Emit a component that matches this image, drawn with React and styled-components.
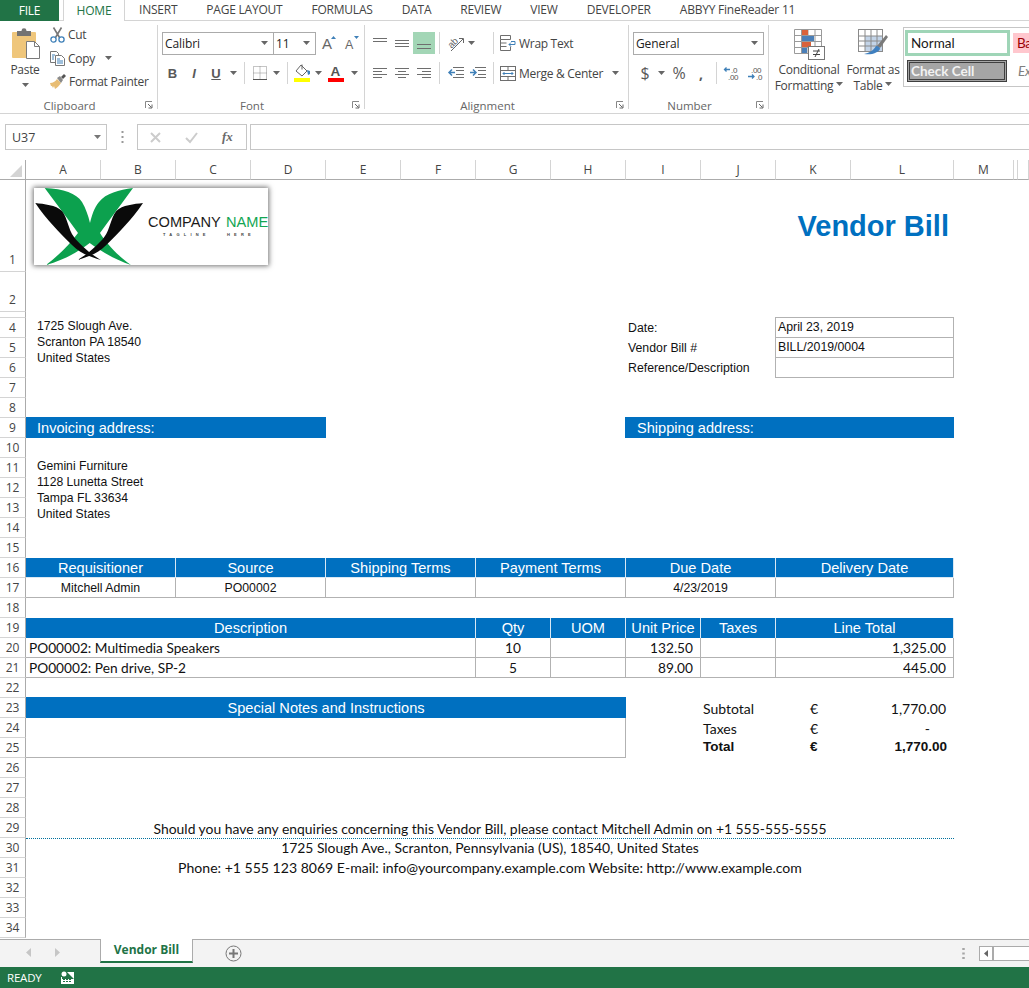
import React from "react";
import styled, { createGlobalStyle } from "styled-components";

const UI = `"Open Sans", "Noto Sans", sans-serif`;
const ARIAL = `"Liberation Sans", Arial, sans-serif`;
const CALIBRI = `Lato, "Open Sans", sans-serif`;
const GREEN = "#217346";
const BLUE = "#0070c0";
const LINE = "#b2b2b2";

const Global = createGlobalStyle`
  html, body { margin: 0; padding: 0; overflow: hidden; background: #fff; }
  * { box-sizing: border-box; }
  svg { overflow: visible; }
`;

const Page = styled.div`
  width: 1029px;
  height: 988px;
  display: flex;
  flex-direction: column;
  overflow: hidden;
  font-family: ${UI};
  color: #444;
`;

/* ---------- tabs ---------- */
const TabBar = styled.div`
  height: 21px;
  flex: none;
  display: flex;
  border-bottom: 1px solid #d4d4d4;
  font-size: 12px;
  letter-spacing: -0.22px;
`;
const FileTab = styled.div`
  width: 59px;
  height: 21px;
  background: ${GREEN};
  color: #fff;
  display: flex;
  align-items: center;
  justify-content: center;
`;
const HomeTab = styled.div`
  margin-left: 4px;
  width: 62px;
  height: 21px;
  background: #fff;
  color: ${GREEN};
  border: solid #d4d4d4;
  border-width: 0 1px;
  display: flex;
  align-items: center;
  justify-content: center;
`;
const Tab = styled.div`
  margin-left: ${(p) => p.$m}px;
  line-height: 20px;
  white-space: nowrap;
`;

/* ---------- ribbon ---------- */
const Ribbon = styled.div`
  height: 93px;
  flex: none;
  display: flex;
  padding-top: 4px;
  border-bottom: 1px solid #d4d4d4;
  font-size: 12px;
  letter-spacing: -0.3px;
`;
const Group = styled.section`
  width: ${(p) => p.$w}px;
  height: 84px;
  flex: none;
  display: flex;
  flex-direction: column;
  border-right: ${(p) => (p.$last ? "none" : "1px solid #d4d4d4")};
`;
const GroupBody = styled.div`
  flex: 1;
  display: flex;
  min-height: 0;
  padding-left: ${(p) => p.$pl || 0}px;
`;
const GroupFoot = styled.footer`
  height: 18px;
  margin-bottom: -5px;
  display: grid;
  grid-template-columns: 1fr auto 1fr;
  align-items: center;
  padding-right: 18px;
  color: #666;
  font-size: 11.5px;
  letter-spacing: 0;
  span { grid-column: 2; }
  svg { justify-self: end; margin-right: -14px; }
`;
const Launcher = () => (
  <svg width="8" height="8" viewBox="0 0 8 8">
    <path d="M0.5 7V0.5H7" fill="none" stroke="#888" />
    <path d="M3 3l3.5 3.5M7 3.5V7H3.5" fill="none" stroke="#666" />
  </svg>
);
const Stack = styled.div`
  display: flex;
  flex-direction: column;
  padding-top: 7px;
  gap: 8px;
`;
const Row = styled.div`
  display: flex;
  align-items: center;
  height: 22px;
`;
const Tool = styled.div`
  width: ${(p) => p.$w}px;
  height: 22px;
  flex: none;
  display: flex;
  align-items: center;
  justify-content: center;
  margin-left: ${(p) => p.$ml || 0}px;
  background: ${(p) => (p.$on ? "#a3d6b6" : "transparent")};
`;
const Sep = styled.i`
  width: 1px;
  height: 22px;
  flex: none;
  background: #d4d4d4;
  margin: 0 ${(p) => p.$r ?? 5}px 0 ${(p) => p.$l ?? 5}px;
`;
const Glyph = styled.span`
  font: ${(p) => (p.$i ? "italic " : "")}${(p) => p.$b || 700} ${(p) => p.$s || 13}px ${(p) => p.$f || ARIAL};
  color: #595959;
  text-decoration: ${(p) => (p.$u ? "underline" : "none")};
  letter-spacing: 0;
`;
const Caret = ({ c = "#666" }) => (
  <svg width="7" height="4" viewBox="0 0 7 4">
    <path d="M0 0h7L3.5 4z" fill={c} />
  </svg>
);
const Combo = styled.div`
  width: ${(p) => p.$w}px;
  height: 23px;
  flex: none;
  margin-left: ${(p) => p.$ml || 0}px;
  border: 1px solid #ababab;
  background: #fff;
  color: #222;
  display: flex;
  align-items: center;
  justify-content: space-between;
  padding: 0 5px 0 2px;
  letter-spacing: -0.1px;
`;

const PasteCol = styled.div`
  width: 50px;
  flex: none;
  display: flex;
  flex-direction: column;
  align-items: center;
  padding-top: 3px;
  gap: 3px;
  span { line-height: 16px; }
  svg:last-child { margin-top: 2px; }
`;
const ClipCol = styled.div`
  display: flex;
  flex-direction: column;
  margin-top: -2px;
`;
const ClipRow = styled.div`
  height: 23.5px;
  flex: none;
  display: flex;
  align-items: center;
  gap: 3px;
  white-space: nowrap;
  svg:first-child { flex: none; }
`;
const TextTool = styled.span`
  margin-left: ${(p) => p.$ml ?? 3}px;
  white-space: nowrap;
`;
const BigTool = styled.div`
  width: ${(p) => p.$w}px;
  flex: none;
  display: flex;
  flex-direction: column;
  align-items: center;
  padding-top: 4px;
  line-height: 16px;
  white-space: nowrap;
  svg:first-child { margin-bottom: 2px; }
  span svg { margin-left: 3px; vertical-align: 2px; }
`;
const Gallery = styled.div`
  margin-top: 2px;
  flex: 1;
  height: 60px;
  border: 1px solid #c6c6c6;
  border-right: none;
  display: grid;
  grid-template-columns: 105px 1fr;
  grid-template-rows: 26px 22px;
  column-gap: 3px;
  row-gap: 4px;
  padding: 2px 0 0 1px;
  overflow: hidden;
`;
const StyleNormal = styled.div`
  border: 3px solid #9fd5b7;
  background: #fff;
  color: #1a1a1a;
  font: 13.5px ${CALIBRI};
  letter-spacing: 0;
  display: flex;
  align-items: center;
  padding-left: 3px;
`;
const StyleBad = styled.div`
  align-self: center;
  height: 20px;
  background: #ffc7ce;
  color: #9c0006;
  font: 13.5px ${CALIBRI};
  padding-left: 4px;
  line-height: 20px;
`;
const StyleCheck = styled.div`
  margin-left: 2px;
  width: 100px;
  background: #a5a5a5;
  border: 3px double #3f3f3f;
  color: #f2f2f2;
  font: 700 13.5px ${CALIBRI};
  letter-spacing: 0;
  display: flex;
  align-items: center;
  padding-left: 1px;
  height: 22px;
`;
const StyleExp = styled.div`
  color: #7f7f7f;
  font: italic 13.5px ${CALIBRI};
  padding-left: 5px;
  line-height: 22px;
`;

/* ---------- ribbon icons ---------- */
const PasteIcon = () => (
  <svg width="29" height="31" viewBox="0 0 29 31" style={{ marginLeft: 2 }}>
    <rect x="0" y="4" width="24" height="26" rx="1" fill="#efc67b" />
    <rect x="5" y="3" width="14" height="5" fill="#737373" />
    <circle cx="12" cy="2.6" r="2.4" fill="#737373" />
    <path d="M14.5 13.5h8l5 5v12h-13z" fill="#fff" stroke="#7a7a7a" />
    <path d="M22.5 13.5v5h5" fill="none" stroke="#7a7a7a" />
  </svg>
);
const CutIcon = () => (
  <svg width="15" height="16" viewBox="0 0 15 16">
    <path d="M3.5 0.5l6 10M11.5 0.5l-6 10" stroke="#777" strokeWidth="1.6" fill="none" />
    <circle cx="3.5" cy="12.5" r="2.6" fill="none" stroke="#3f80b8" strokeWidth="1.3" />
    <circle cx="11.5" cy="12.5" r="2.6" fill="none" stroke="#3f80b8" strokeWidth="1.3" />
  </svg>
);
const CopyIcon = () => (
  <svg width="15" height="15" viewBox="0 0 15 15">
    <path d="M0.5 0.5h6l2 2v9h-8z" fill="#fff" stroke="#777" />
    <path d="M5.5 4.5h6l3 3v7h-9z" fill="#fff" stroke="#777" />
    <path d="M2 4h3M2 6h2M2 8h2M7 8h3M7 10h6M7 12h6" stroke="#3f80b8" />
  </svg>
);
const BrushIcon = () => (
  <svg width="16" height="15" viewBox="0 0 16 15">
    <path d="M0 9c3 0 6-2 7-4l4 4c-2 3-4 5-6 6L4 12l-1 2-1-2-1 0z" fill="#e8bd74" />
    <path d="M7 4l3-2 3 4-2 3z" fill="#8a8a8a" />
    <path d="M11 3l3-3 2 2-3 3z" fill="#555" />
  </svg>
);
const GrowIcon = ({ up }) => (
  <svg width="14" height="14" viewBox="0 0 14 14">
    <text x="0" y={13} fontFamily="Liberation Sans" fontSize={up ? 15 : 12.5} fill="#666">A</text>
    <path d={up ? "M9 3l2.5-3L14 3z" : "M9 0h5l-2.5 3z"} fill="#3f80b8" />
  </svg>
);
const BorderIcon = () => (
  <svg width="14" height="14" viewBox="0 0 14 14">
    <path d="M0.5 0.5h13v13h-13zM7 0.5v13M0.5 7h13" fill="none" stroke="#8a8a8a" strokeDasharray="1 1" />
    <path d="M0 13.5h14" stroke="#555" />
  </svg>
);
const FillIcon = () => (
  <svg width="17" height="19" viewBox="0 0 17 19">
    <path d="M7 1l6 6-5 5-6-5z" fill="#fff" stroke="#666" />
    <path d="M8 0.5v5" stroke="#666" />
    <path d="M13 6l3 1 0 3-2 1z" fill="#3f80b8" />
    <rect x="0" y="14" width="16" height="4" fill="#ffff00" />
  </svg>
);
const FontColorIcon = () => (
  <svg width="16" height="19" viewBox="0 0 16 19">
    <text x="2.5" y="12" fontFamily="Liberation Sans" fontWeight="700" fontSize="13.5" fill="#555">A</text>
    <rect x="0" y="14" width="16" height="4" fill="#ff0000" />
  </svg>
);
const Lines = ({ rows }) => (
  <svg width="14" height="14" viewBox="0 0 14 14">
    {rows.map(([a, b, y]) => (
      <path key={y} d={`M${a} ${y + 0.5}H${b}`} stroke="#6e6e6e" />
    ))}
  </svg>
);
const OrientIcon = () => (
  <svg width="18" height="18" viewBox="0 0 18 18">
    <text x="1" y="12" fontFamily="Liberation Sans" fontSize="9.5" fill="#666" transform="rotate(-45 6 9)">ab</text>
    <path d="M4 17L16 5M12 4.5h4.5V9" fill="none" stroke="#666" />
  </svg>
);
const IndentIcon = ({ rev }) => (
  <svg width="16" height="12" viewBox="0 0 16 12">
    <path d="M5 0.5h11M8 3.5h8M8 7.5h8M5 10.5h11" stroke="#6e6e6e" />
    <path d={rev ? "M7 5.5H1M4 2.5l-3 3 3 3" : "M0 5.5h6M3 2.5l3 3-3 3"} fill="none" stroke="#3f80b8" strokeWidth="1.5" />
  </svg>
);
const WrapIcon = () => (
  <svg width="16" height="16" viewBox="0 0 16 16">
    <path d="M0.5 0.5h10v4h-10zM0.5 4.5v11h10v-4M0.5 8h6M0.5 11.5h6" fill="none" stroke="#6e6e6e" />
    <path d="M11 6.5h4v3H9M11 7.5l-2 2 2 2" fill="none" stroke="#3f80b8" />
  </svg>
);
const MergeIcon = () => (
  <svg width="16" height="15" viewBox="0 0 16 15">
    <rect x="0.5" y="0.5" width="15" height="14" fill="none" stroke="#6e6e6e" />
    <path d="M0.5 4.5h15M0.5 10.5h15M8 0.5v4M8 10.5v4" stroke="#6e6e6e" />
    <path d="M3 7.5h10M4.5 6l-1.5 1.5 1.5 1.5M11.5 6l1.5 1.5-1.5 1.5" fill="none" stroke="#3f80b8" />
  </svg>
);
const DecIcon = ({ more }) => (
  <svg width="15" height="15" viewBox="0 0 15 15">
    {more ? (
      <>
        <text x="3" y="6.5" fontFamily="Liberation Sans" fontSize="8" fill="#555">.00</text>
        <text x="8" y="14" fontFamily="Liberation Sans" fontSize="8" fill="#555">.0</text>
        <path d="M0 10.5h6M4 8.5l2 2-2 2" fill="none" stroke="#3f80b8" strokeWidth="1.3" />
      </>
    ) : (
      <>
        <text x="7" y="6.5" fontFamily="Liberation Sans" fontSize="8" fill="#555">.0</text>
        <text x="4" y="14" fontFamily="Liberation Sans" fontSize="8" fill="#555">.00</text>
        <path d="M6 3.5H0.5M2.5 1.5l-2 2 2 2" fill="none" stroke="#3f80b8" strokeWidth="1.3" />
      </>
    )}
  </svg>
);
const CondIcon = () => (
  <svg width="31" height="31" viewBox="0 0 31 31">
    <path d="M0.5 0.5h27v24h-27zM7.5 0.5v24M14 0.5v24M21 0.5v24M0.5 6.5h27M0.5 12.5h27M0.5 18.5h27" fill="none" stroke="#9a9a9a" />
    <rect x="8" y="1" width="6" height="5" fill="#d9623a" />
    <rect x="8" y="7" width="12" height="5" fill="#4a7fb8" />
    <rect x="8" y="13" width="9" height="5" fill="#d9623a" />
    <rect x="8" y="19" width="5" height="5" fill="#4a7fb8" />
    <rect x="14.5" y="17.5" width="16" height="13" fill="#fff" stroke="#777" />
    <path d="M19 22h7M19 25.5h7M25 20l-4 8" fill="none" stroke="#444" />
  </svg>
);
const TableIcon = () => (
  <svg width="31" height="31" viewBox="0 0 31 31">
    <rect x="0.5" y="0.5" width="24" height="22" fill="#fff" stroke="#8a8a8a" />
    <rect x="7" y="7" width="17" height="15" fill="#c3d4e8" />
    <path d="M7 0.5v22M13 0.5v22M19 0.5v22M0.5 7h24M0.5 12h24M0.5 17h24" fill="none" stroke="#8a8a8a" />
    <path d="M19 17l9-11 2 2-8 11z" fill="#7a7a7a" />
    <path d="M18 17c3 0 4 2 4 3-2 4-8 6-16 5 5-1 9-3 12-8z" fill="#3f80c0" />
  </svg>
);

/* ---------- formula bar ---------- */
const FormulaBar = styled.div`
  height: 46px;
  flex: none;
  display: flex;
  align-items: flex-start;
  padding: 10px 0 0 5px;
`;
const NameBox = styled.div`
  width: 102px;
  height: 26px;
  border: 1px solid #c6c6c6;
  display: flex;
  align-items: center;
  justify-content: space-between;
  padding: 0 5px 0 6px;
  font-size: 12.5px;
`;
const Dots = styled.div`
  width: 30px;
  height: 26px;
  display: flex;
  align-items: center;
  justify-content: center;
`;
const FxBox = styled.div`
  width: 110px;
  height: 26px;
  border: 1px solid #c6c6c6;
  display: flex;
  align-items: center;
  padding-left: 12px;
  gap: 24px;
`;
const Fx = styled.span`
  font: italic 700 13px "Liberation Serif", serif;
  color: #6a6a6a;
`;
const FormulaInput = styled.div`
  flex: 1;
  height: 26px;
  margin-left: 3px;
  border: 1px solid #c6c6c6;
  border-right: none;
`;

/* ---------- sheet ---------- */
const Sheet = styled.div`
  flex: none;
  height: 779px;
  display: grid;
  grid-template-columns: 26px repeat(11, 75px) 103px 60px 4px 1fr;
  grid-template-rows: 20px 92px 40px 6px repeat(31, 20px);
  overflow: hidden;
`;
const Corner = styled.div`
  grid-column: 1;
  grid-row: 1;
  border-right: 1px solid #ababab;
  border-bottom: 1px solid #ababab;
  display: flex;
  padding: 5px 0 0 10px;
`;
const ColHead = styled.div`
  grid-row: 1;
  grid-column: ${(p) => p.$c + 1};
  border-bottom: 1px solid #ababab;
  border-right: 1px solid #d4d4d4;
  display: flex;
  align-items: center;
  justify-content: center;
  font-size: 12px;
  color: #444;
`;
const RowHead = styled.div`
  grid-column: 1;
  grid-row: ${(p) => p.$r};
  border-right: 1px solid #ababab;
  border-bottom: 1px solid #d4d4d4;
  display: flex;
  align-items: ${(p) => (p.$tall ? "flex-end" : "center")};
  justify-content: center;
  padding-bottom: ${(p) => (p.$tall ? 2 : 0)}px;
  font-size: 12px;
  line-height: 18px;
  color: #444;
`;
/* $r is the grid line: sheet row n sits on line n + 1, below the column heads */
const Cell = styled.div`
  grid-column: ${(p) => p.$c + 1} / span ${(p) => p.$s || 1};
  grid-row: ${(p) => p.$r} / span ${(p) => p.$rs || 1};
  min-width: 0;
  display: flex;
  align-items: center;
  white-space: nowrap;
  font: 12.3px ${ARIAL};
  color: #111;
`;
const LogoCell = styled(Cell)`
  padding: 8px 0 0 8px;
  align-items: flex-start;
`;
const LogoFrame = styled.svg`
  display: block;
  background: #fff;
  box-shadow: 0 0 5px 1px rgba(0, 0, 0, 0.55);
`;
const Title = styled(Cell)`
  justify-content: flex-end;
  padding-right: 5px;
  font: 700 29px ${ARIAL};
  color: #0070c0;
`;
const Address = styled(Cell)`
  display: block;
  padding: 1px 0 0 11px;
  font-size: 12.2px;
  line-height: 16px;
  margin-top: -1px;
`;
const Label = styled(Cell)`
  padding-left: 2px;
`;
const InfoBox = styled(Cell)`
  margin: -1px 0 0 -1px;
  border: 1px solid ${LINE};
  padding: 0 0 1px 2px;
`;
const Band = styled(Cell)`
  background: ${BLUE};
  color: #fff;
  font-size: 14.6px;
  margin-top: -1px;
  padding-left: ${(p) => (p.$left ? 12 : 11)}px;
  margin-left: ${(p) => (p.$left ? -1 : 0)}px;
`;
const Head = styled(Cell)`
  background: ${BLUE};
  color: #fff;
  font-size: 14.6px;
  justify-content: center;
  border-right: 1px solid #d8e8f4;
  ${(p) => p.$line && "border-bottom: 1px solid #d8e8f4;"}
`;
const Td = styled(Cell)`
  justify-content: ${(p) => p.$a || "flex-start"};
  padding: ${(p) => p.$p || "0"};
  border-right: 1px solid ${LINE};
  border-bottom: 1px solid ${LINE};
  font: ${(p) => (p.$cal ? `13.7px ${CALIBRI}` : `12.3px ${ARIAL}`)};
`;
const NotesBand = styled(Cell)`
  background: ${BLUE};
  color: #fff;
  font-size: 14.6px;
  justify-content: center;
  margin-top: -1px;
`;
const NotesBody = styled(Cell)`
  border-right: 1px solid ${LINE};
  border-bottom: 1px solid ${LINE};
`;
const Total = styled(Cell)`
  font: ${(p) => (p.$bold ? `700 13.5px ${ARIAL}` : `14px ${CALIBRI}`)};
  justify-content: ${(p) => p.$a || "flex-start"};
  padding: ${(p) => p.$p || "0"};
  ${(p) => p.$bold && "padding-bottom: 4px;"}
`;
const Footnote = styled(Cell)`
  justify-content: center;
  font: ${(p) => p.$size || 13.9}px ${CALIBRI};
  ${(p) => (p.$dotted ? "border-bottom: 1px dotted #00709c; margin-bottom: -1px;" : "padding-bottom: 1px;")}
`;

/* ---------- sheet tabs and status ---------- */
const SheetTabs = styled.div`
  height: 28px;
  flex: none;
  display: flex;
  align-items: flex-start;
  background: #f3f3f3;
  border-top: 1px solid #ababab;
`;
const NavArrows = styled.div`
  width: 100px;
  height: 27px;
  display: flex;
  align-items: center;
  gap: 24px;
  padding: 0 0 2px 26px;
`;
const SheetTab = styled.div`
  width: 93px;
  height: 24px;
  margin-top: -1px;
  background: #fff;
  border: solid #ababab;
  border-width: 0 1px;
  border-bottom: 2px solid ${GREEN};
  color: ${GREEN};
  font-size: 12px;
  font-weight: 700;
  display: flex;
  align-items: center;
  justify-content: center;
  padding-bottom: 1px;
`;
const AddSheet = styled.div`
  margin-left: 32px;
  height: 27px;
  display: flex;
  align-items: center;
`;
const TabsRight = styled.div`
  margin-left: auto;
  height: 27px;
  display: flex;
  align-items: center;
  padding-bottom: 1px;
`;
const ScrollTrack = styled.div`
  margin-left: 14px;
  width: 50px;
  height: 15px;
  border: 1px solid #ababab;
  border-right: none;
  background: #fff;
  display: flex;
`;
const ScrollBtn = styled.div`
  width: 14px;
  border-right: 2px solid #ababab;
  display: flex;
  align-items: center;
  justify-content: center;
`;
const Status = styled.div`
  flex: 1;
  background: ${GREEN};
  color: #fff;
  font-size: 11.5px;
  letter-spacing: -0.2px;
  display: flex;
  align-items: center;
  padding-left: 7px;
  gap: 19px;
`;

const COLS = ["A", "B", "C", "D", "E", "F", "G", "H", "I", "J", "K", "L", "M", "", ""];
const ROWS = Array.from({ length: 34 }, (_, i) => i + 1).filter((n) => n !== 3);
const WING = "M1.3 15C10 16 22 17 28 23c6 8 6 18 12 26 6 8 18 18 27 23-11-3-21-7-29-15C26 45 12 31 1.3 15z";

const Logo = () => (
  <LogoFrame width="234" height="77" viewBox="0 0 234 77">
    <path
      d="M10.7 0C30 1 42 5 48 14c4 7 6 13 8 21 2-8 4-15 9-21C72 5 85 2 99 0 88 15 76 31 66 45c6 10 18 23 31 32-15-5-29-13-41.3-22C44 64 30 72 12 77c12-9 24-21 32-32C34 31 22 15 10.7 0z"
      fill="#0ca14e"
    />
    <path d={WING} fill="#0a0a0a" />
    <path d={WING} fill="#0a0a0a" transform="translate(110.3 0) scale(-1 1)" />
    <text x="114" y="38.5" fontFamily="Liberation Sans" fontSize="14.6" fill="#1a1a1a">COMPANY</text>
    <text x="192" y="38.5" fontFamily="Liberation Sans" fontSize="14.6" fill="#12a552">NAME</text>
    <text x="129" y="48" fontFamily="Liberation Sans" fontWeight="700" fontSize="4" letterSpacing="4.2" fill="#444">TAGLINE</text>
    <text x="193" y="48" fontFamily="Liberation Sans" fontWeight="700" fontSize="4" letterSpacing="4.2" fill="#444">HERE</text>
  </LogoFrame>
);

const requisition = [
  [1, "Requisitioner", "Mitchell Admin"],
  [3, "Source", "PO00002"],
  [5, "Shipping Terms", ""],
  [7, "Payment Terms", ""],
  [9, "Due Date", "4/23/2019"],
  [11, "Delivery Date", ""],
];
const lineHeads = [
  [1, 6, "Description"],
  [7, 1, "Qty"],
  [8, 1, "UOM"],
  [9, 1, "Unit Price"],
  [10, 1, "Taxes"],
  [11, 2, "Line Total"],
];
const items = [
  [20, "PO00002: Multimedia Speakers", "10", "132.50", "1,325.00"],
  [21, "PO00002: Pen drive, SP-2", "5", "89.00", "445.00"],
];

export default function App() {
  return (
    <Page>
      <Global />
      <TabBar>
        <FileTab>FILE</FileTab>
        <HomeTab>HOME</HomeTab>
        <Tab $m={14}>INSERT</Tab>
        <Tab $m={29}>PAGE LAYOUT</Tab>
        <Tab $m={29}>FORMULAS</Tab>
        <Tab $m={29}>DATA</Tab>
        <Tab $m={29}>REVIEW</Tab>
        <Tab $m={29}>VIEW</Tab>
        <Tab $m={29}>DEVELOPER</Tab>
        <Tab $m={29}>ABBYY FineReader 11</Tab>
      </TabBar>

      <Ribbon>
        <Group $w={158}>
          <GroupBody>
            <PasteCol>
              <PasteIcon />
              <span>Paste</span>
              <Caret />
            </PasteCol>
            <ClipCol>
              <ClipRow><CutIcon /><span>Cut</span></ClipRow>
              <ClipRow><CopyIcon /><span>Copy</span><Tool $w={22}><Caret /></Tool></ClipRow>
              <ClipRow><BrushIcon /><span>Format Painter</span></ClipRow>
            </ClipCol>
          </GroupBody>
          <GroupFoot><span>Clipboard</span><Launcher /></GroupFoot>
        </Group>

        <Group $w={207}>
          <GroupBody $pl={4}>
            <Stack>
              <Row>
                <Combo $w={112}>Calibri<Caret /></Combo>
                <Combo $w={43} $ml={-1}>11<Caret /></Combo>
                <Tool $w={20} $ml={3}><GrowIcon up /></Tool>
                <Tool $w={20} $ml={3}><GrowIcon /></Tool>
              </Row>
              <Row>
                <Tool $w={21}><Glyph>B</Glyph></Tool>
                <Tool $w={22}><Glyph $i>I</Glyph></Tool>
                <Tool $w={22}><Glyph $u>U</Glyph></Tool>
                <Tool $w={12}><Caret /></Tool>
                <Sep />
                <Tool $w={20}><BorderIcon /></Tool>
                <Tool $w={12}><Caret /></Tool>
                <Sep />
                <Tool $w={18}><FillIcon /></Tool>
                <Tool $w={14}><Caret /></Tool>
                <Tool $w={22}><FontColorIcon /></Tool>
                <Tool $w={14}><Caret /></Tool>
              </Row>
            </Stack>
          </GroupBody>
          <GroupFoot><span>Font</span><Launcher /></GroupFoot>
        </Group>

        <Group $w={264}>
          <GroupBody $pl={4}>
            <Stack>
              <Row>
                <Tool $w={22}><Lines rows={[[0, 14, 2], [0, 14, 5]]} /></Tool>
                <Tool $w={22}><Lines rows={[[0, 14, 4], [0, 14, 7], [0, 14, 10]]} /></Tool>
                <Tool $w={22} $on><Lines rows={[[0, 14, 8], [0, 14, 12]]} /></Tool>
                <Sep $l={4} />
                <Tool $w={22}><OrientIcon /></Tool>
                <Tool $w={8}><Caret /></Tool>
                <Sep $l={18} $r={6} />
                <WrapIcon />
                <TextTool>Wrap Text</TextTool>
              </Row>
              <Row>
                <Tool $w={22}><Lines rows={[[0, 14, 2], [0, 9, 5], [0, 14, 8], [0, 9, 11]]} /></Tool>
                <Tool $w={22}><Lines rows={[[0, 14, 2], [3, 11, 5], [0, 14, 8], [3, 11, 11]]} /></Tool>
                <Tool $w={22}><Lines rows={[[0, 14, 2], [5, 14, 5], [0, 14, 8], [5, 14, 11]]} /></Tool>
                <Sep $l={4} />
                <Tool $w={22}><IndentIcon rev /></Tool>
                <Tool $w={22}><IndentIcon /></Tool>
                <Sep $l={4} $r={6} />
                <MergeIcon />
                <TextTool>Merge &amp; Center</TextTool>
                <Tool $w={8} $ml={8}><Caret /></Tool>
              </Row>
            </Stack>
          </GroupBody>
          <GroupFoot><span>Alignment</span><Launcher /></GroupFoot>
        </Group>

        <Group $w={140}>
          <GroupBody $pl={4}>
            <Stack>
              <Row><Combo $w={131}>General<Caret /></Combo></Row>
              <Row>
                <Tool $w={24}><Glyph $b={400} $s={16} $f={UI}>$</Glyph></Tool>
                <Tool $w={8}><Caret /></Tool>
                <Tool $w={28}><Glyph $b={400} $s={16} $f={UI}>%</Glyph></Tool>
                <Tool $w={16}><Glyph $s={14} $f={UI}>,</Glyph></Tool>
                <Sep $l={7} $r={7} />
                <Tool $w={15}><DecIcon /></Tool>
                <Tool $w={15} $ml={9}><DecIcon more /></Tool>
              </Row>
            </Stack>
          </GroupBody>
          <GroupFoot><span>Number</span><Launcher /></GroupFoot>
        </Group>

        <Group $w={260} $last>
          <GroupBody $pl={6}>
            <BigTool $w={68}>
              <CondIcon />
              <span>Conditional</span>
              <span>Formatting<Caret /></span>
            </BigTool>
            <BigTool $w={60}>
              <TableIcon />
              <span>Format as</span>
              <span>Table<Caret /></span>
            </BigTool>
            <Gallery>
              <StyleNormal>Normal</StyleNormal>
              <StyleBad>Bad</StyleBad>
              <StyleCheck>Check Cell</StyleCheck>
              <StyleExp>Explanatory</StyleExp>
            </Gallery>
          </GroupBody>
        </Group>
      </Ribbon>

      <FormulaBar>
        <NameBox>U37<Caret c="#777" /></NameBox>
        <Dots>
          <svg width="3" height="12" viewBox="0 0 3 12">
            <path d="M1.5 0v2M1.5 5v2M1.5 10v2" stroke="#999" strokeWidth="2" />
          </svg>
        </Dots>
        <FxBox>
          <svg width="11" height="11" viewBox="0 0 11 11">
            <path d="M1 1l9 9M10 1l-9 9" stroke="#ccc" strokeWidth="2" />
          </svg>
          <svg width="13" height="11" viewBox="0 0 13 11">
            <path d="M1 6l4 4 7-9" fill="none" stroke="#ccc" strokeWidth="2" />
          </svg>
          <Fx>fx</Fx>
        </FxBox>
        <FormulaInput />
      </FormulaBar>

      <Sheet>
        <Corner>
          <svg width="12" height="12" viewBox="0 0 12 12"><path d="M12 0v12H0z" fill="#d4d4d4" /></svg>
        </Corner>
        {COLS.map((c, i) => <ColHead key={i} $c={i + 1}>{c}</ColHead>)}
        {ROWS.map((n) => <RowHead key={n} $r={n + 1} $tall={n < 3}>{n}</RowHead>)}
        <RowHead $r={4} />

        <LogoCell $c={1} $s={4} $r={2}><Logo /></LogoCell>
        <Title $c={10} $s={3} $r={2}>Vendor Bill</Title>

        <Address $c={1} $s={4} $r={5} $rs={3}>
          1725 Slough Ave.<br />Scranton PA 18540<br />United States
        </Address>
        <Label $c={9} $s={2} $r={5}>Date:</Label>
        <Label $c={9} $s={2} $r={6}>Vendor Bill #</Label>
        <Label $c={9} $s={2} $r={7}>Reference/Description</Label>
        <InfoBox $c={11} $s={2} $r={5}>April 23, 2019</InfoBox>
        <InfoBox $c={11} $s={2} $r={6}>BILL/2019/0004</InfoBox>
        <InfoBox $c={11} $s={2} $r={7} />

        <Band $c={1} $s={4} $r={10}>Invoicing address:</Band>
        <Band $c={9} $s={4} $r={10} $left>Shipping address:</Band>

        <Address $c={1} $s={4} $r={12} $rs={4}>
          Gemini Furniture<br />1128 Lunetta Street<br />Tampa FL 33634<br />United States
        </Address>

        {requisition.map(([c, head, val]) => (
          <React.Fragment key={head}>
            <Head $c={c} $s={2} $r={17} $line>{head}</Head>
            <Td $c={c} $s={2} $r={18} $a="center">{val}</Td>
          </React.Fragment>
        ))}

        {lineHeads.map(([c, s, head]) => (
          <Head key={head} $c={c} $s={s} $r={20}>{head}</Head>
        ))}
        {items.map(([r, desc, qty, price, total]) => (
          <React.Fragment key={r}>
            <Td $c={1} $s={6} $r={r + 1} $cal $p="0 0 0 3px">{desc}</Td>
            <Td $c={7} $r={r + 1} $cal $a="center">{qty}</Td>
            <Td $c={8} $r={r + 1} />
            <Td $c={9} $r={r + 1} $cal $a="flex-end" $p="0 7px 0 0">{price}</Td>
            <Td $c={10} $r={r + 1} />
            <Td $c={11} $s={2} $r={r + 1} $cal $a="flex-end" $p="0 7px 0 0">{total}</Td>
          </React.Fragment>
        ))}

        <NotesBand $c={1} $s={8} $r={24}>Special Notes and Instructions</NotesBand>
        <NotesBody $c={1} $s={8} $r={25} $rs={2} />

        <Total $c={10} $r={24} $p="0 0 0 2px">Subtotal</Total>
        <Total $c={11} $r={24} $p="0 0 0 34px">€</Total>
        <Total $c={12} $r={24} $a="flex-end" $p="0 8px 0 0">1,770.00</Total>
        <Total $c={10} $r={25} $p="0 0 0 2px">Taxes</Total>
        <Total $c={11} $r={25} $p="0 0 0 34px">€</Total>
        <Total $c={12} $r={25} $a="flex-end" $p="0 24px 0 0">-</Total>
        <Total $c={10} $r={26} $p="0 0 0 2px" $bold>Total</Total>
        <Total $c={11} $r={26} $p="0 0 0 34px" $bold>€</Total>
        <Total $c={12} $r={26} $a="flex-end" $p="0 7px 0 0" $bold>1,770.00</Total>

        <Footnote $c={1} $s={12} $r={30} $dotted>
          Should you have any enquiries concerning this Vendor Bill, please contact Mitchell Admin on +1 555-555-5555
        </Footnote>
        <Footnote $c={1} $s={12} $r={31}>1725 Slough Ave., Scranton, Pennsylvania (US), 18540, United States</Footnote>
        <Footnote $c={1} $s={12} $r={32} $size={14.05}>
          Phone: +1 555 123 8069 E-mail: info@yourcompany.example.com Website: http://www.example.com
        </Footnote>
      </Sheet>

      <SheetTabs>
        <NavArrows>
          <svg width="5" height="9" viewBox="0 0 5 9"><path d="M5 0v9L0 4.5z" fill="#c6c6c6" /></svg>
          <svg width="5" height="9" viewBox="0 0 5 9"><path d="M0 0v9l5-4.5z" fill="#c6c6c6" /></svg>
        </NavArrows>
        <SheetTab>Vendor Bill</SheetTab>
        <AddSheet>
          <svg width="17" height="17" viewBox="0 0 17 17">
            <circle cx="8.5" cy="8.5" r="7.5" fill="none" stroke="#777" />
            <path d="M8.5 4v9M4 8.5h9" stroke="#777" strokeWidth="2" />
          </svg>
        </AddSheet>
        <TabsRight>
          <svg width="3" height="11" viewBox="0 0 3 11">
            <path d="M1.5 0v2M1.5 4.5v2M1.5 9v2" stroke="#a6a6a6" strokeWidth="2.5" />
          </svg>
          <ScrollTrack>
            <ScrollBtn>
              <svg width="4" height="7" viewBox="0 0 4 7"><path d="M4 0v7L0 3.5z" fill="#666" /></svg>
            </ScrollBtn>
          </ScrollTrack>
        </TabsRight>
      </SheetTabs>

      <Status>
        <span>READY</span>
        <svg width="13" height="13" viewBox="0 0 13 13">
          <circle cx="3" cy="3" r="2.5" fill="#fff" />
          <path d="M6 1h7v12H0V6h1v2h12" fill="#fff" />
          <path d="M2 8.5h2M5 8.5h2M8 8.5h2M2 10.5h2M5 10.5h2M8 10.5h2" stroke={GREEN} />
        </svg>
      </Status>
    </Page>
  );
}
